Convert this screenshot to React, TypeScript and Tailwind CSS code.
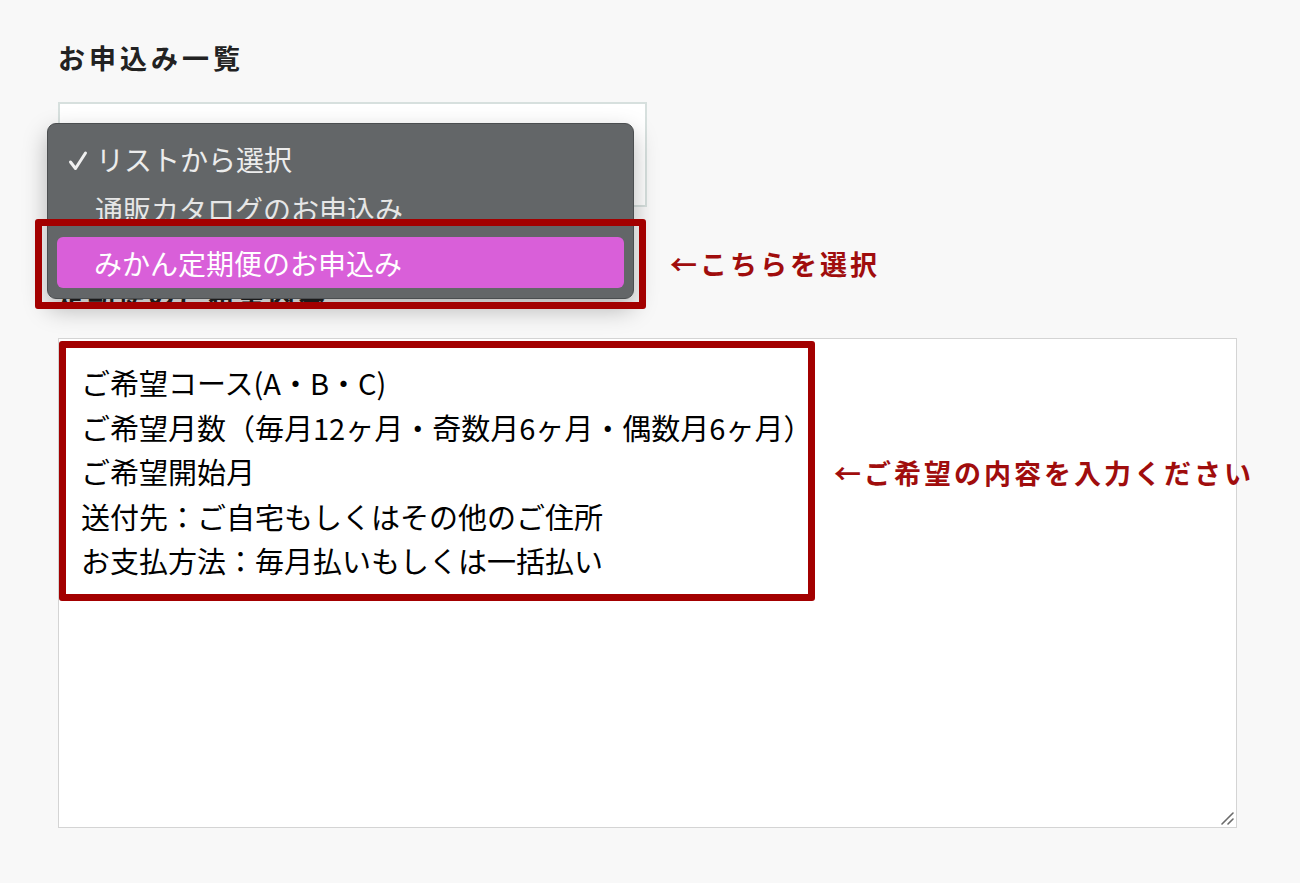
import React from "react";

const jp = "font-['Noto_Sans_CJK_JP','Noto_Sans',sans-serif]";

const lines = [
  "ご希望コース(A・B・C)",
  "ご希望月数（毎月12ヶ月・奇数月6ヶ月・偶数月6ヶ月）",
  "ご希望開始月",
  "送付先：ご自宅もしくはその他のご住所",
  "お支払方法：毎月払いもしくは一括払い",
];

function ResizeGrip() {
  return (
    <svg className="absolute bottom-[2px] right-[2px]" width="14" height="14" viewBox="0 0 14 14">
      <path d="M2 13 L13 2 M8 13 L13 8" stroke="#6b6b6b" strokeWidth="1.6" strokeLinecap="round" />
    </svg>
  );
}

function Check() {
  return (
    <svg width="20" height="22" viewBox="0 0 20 22" className="mt-[4px] shrink-0">
      <path d="M2.5 12 L7.5 18.5 L17.5 3" fill="none" stroke="#f0f0f0" strokeWidth="3" strokeLinecap="round" strokeLinejoin="round" />
    </svg>
  );
}

export default function App() {
  return (
    <main className={`relative min-h-[883px] w-full bg-[#f8f8f8] ${jp}`}>
      <div className="flex flex-col items-start pl-[58px] pt-[40px]">
        <h2 className="text-[27px] font-bold leading-[36px] tracking-[4px] text-[#222]">お申込み一覧</h2>

        <div className="relative mt-[26px] h-[105px] w-[589px] border-2 border-[#d7e0de] bg-white">
          {/* open select menu */}
          <div className="absolute left-[-13px] top-[19px] z-20 flex w-[587px] flex-col rounded-[9px] border border-[#4b4e50] bg-[#636668] py-[10px] shadow-[0_10px_24px_rgba(0,0,0,0.28)]">
            <div className="flex h-[50px] items-center gap-[8px] pl-[20px] text-[28px] text-[#ececec]">
              <Check />
              <span>リストから選択</span>
            </div>
            <div className="flex h-[50px] items-center pl-[47px] text-[28px] text-[#e6e6e6]">通販カタログのお申込み</div>
            <div className="mx-[9px] mt-[3px] flex h-[51px] items-center rounded-[6px] bg-[#d95fd9] pl-[37px] text-[28px] text-white">
              みかん定期便のお申込み
            </div>
          </div>
          <div className="absolute left-[-25px] top-[115px] z-30 h-[90px] w-[611px] rounded-[3px] border-[7px] border-[#a30000]" />
          <p className="absolute left-[610px] top-[145px] whitespace-nowrap text-[27px] font-bold leading-[30px] tracking-[3px] text-[#a00d0d]">
            ←こちらを選択
          </p>
        </div>

        <p className="mt-[73px] text-[27px] font-bold leading-[30px] tracking-[3px] text-[#222]">定期便のご希望内容</p>

        <div className="relative mt-[28px] flex h-[490px] w-[1179px] items-start gap-[19px] border border-[#d4d4d4] bg-white pt-[2px]">
          <div className="flex w-[756px] flex-col rounded-[3px] border-[7px] border-[#a30000] pl-[15px] pt-[12px] pb-[11px] text-[29px] leading-[44.5px] text-black">
            {lines.map((l) => (
              <div key={l} className="whitespace-nowrap">{l}</div>
            ))}
          </div>
          <p className="mt-[117px] whitespace-nowrap text-[27px] font-bold leading-[30px] tracking-[3px] text-[#a00d0d]">
            ←ご希望の内容を入力ください
          </p>
          <ResizeGrip />
        </div>
      </div>
    </main>
  );
}
